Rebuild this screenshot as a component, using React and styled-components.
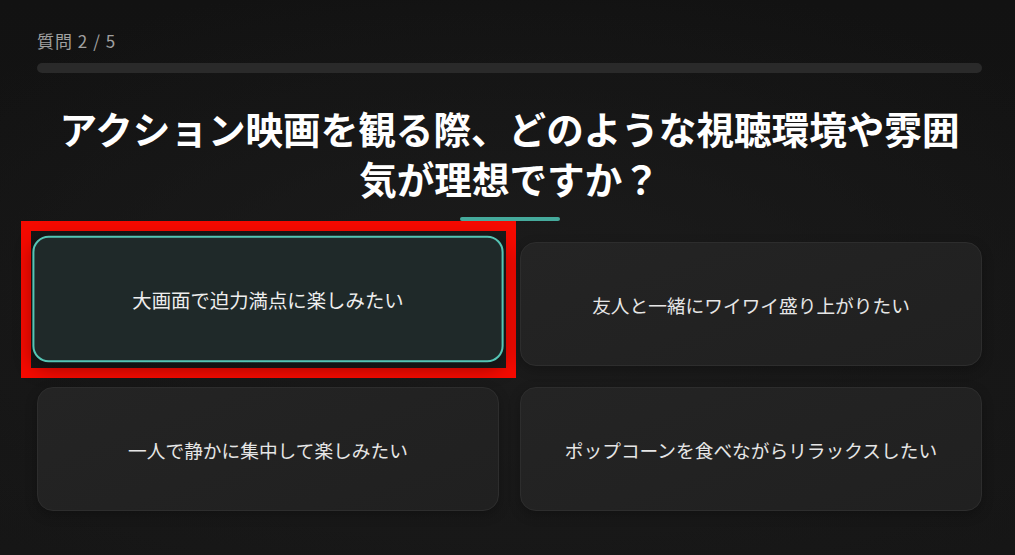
import React from "react";
import styled, { createGlobalStyle } from "styled-components";

const Global = createGlobalStyle`
  html, body { margin: 0; padding: 0; }
  body {
    background: #141414;
    font-family: "Noto Sans CJK JP", "Noto Sans", sans-serif;
  }
`;

const Page = styled.div`
  width: 1015px;
  height: 555px;
  box-sizing: border-box;
  padding: 30px 33px 0 37px;
  background:
    radial-gradient(ellipse 70% 60% at 50% 55%, #1c1c1c 0%, rgba(20,20,20,0) 100%),
    linear-gradient(180deg, #121212 0%, #161616 100%);
  display: flex;
  flex-direction: column;
  overflow: hidden;
`;

const Counter = styled.div`
  font-family: "Noto Sans CJK JP", Roboto, sans-serif;
  font-size: 17px;
  line-height: 22px;
  color: #a0a0a0;
  letter-spacing: 0.06em;
`;

const Track = styled.div`
  margin-top: 11px;
  height: 10px;
  border-radius: 5px;
  background: #2a2a2a;
`;

const Title = styled.h1`
  margin: 30px auto 0;
  max-width: 910px;
  font-size: 37.6px;
  line-height: 50px;
  font-weight: 700;
  color: #ffffff;
  text-align: center;
`;

const Accent = styled.div`
  align-self: center;
  width: 100px;
  height: 4px;
  border-radius: 2px;
  margin-top: 14px;
  background: #45aa9c;
`;

const Grid = styled.div`
  margin-top: 21px;
  display: grid;
  grid-template-columns: 462px 462px;
  grid-auto-rows: 124px;
  column-gap: 21px;
  row-gap: 21px;
`;

const Cell = styled.div`
  position: relative;
`;

const Card = styled.div`
  height: 100%;
  box-sizing: border-box;
  border-radius: 16px;
  display: flex;
  align-items: center;
  justify-content: center;
  font-size: ${(p) => (p.$selected ? "19px" : "18.7px")};
  color: ${(p) => (p.$selected ? "#eeeeee" : "#e6e6e6")};
  background: ${(p) =>
    p.$selected
      ? "#1f2929"
      : "linear-gradient(160deg, #242424 0%, #202020 100%)"};
  border: ${(p) => (p.$selected ? "2px solid #55c4b4" : "1px solid #2d2d2d")};
  transform: ${(p) => (p.$selected ? "translateY(-5px) scale(1.02)" : "none")};
  box-shadow: ${(p) =>
    p.$selected ? "0 6px 18px rgba(0,0,0,0.35)" : "0 4px 12px rgba(0,0,0,0.25)"};
`;

const Highlight = styled.div`
  position: absolute;
  left: -16px;
  right: -17px;
  top: -21px;
  bottom: -12px;
  border: 10px solid #f50a00;
  pointer-events: none;
`;

const options = [
  "大画面で迫力満点に楽しみたい",
  "友人と一緒にワイワイ盛り上がりたい",
  "一人で静かに集中して楽しみたい",
  "ポップコーンを食べながらリラックスしたい",
];

export default function App() {
  const selected = 0;
  return (
    <>
      <Global />
      <Page>
        <Counter>質問 2 / 5</Counter>
        <Track />
        <Title>アクション映画を観る際、どのような視聴環境や雰囲気が理想ですか？</Title>
        <Accent />
        <Grid>
          {options.map((o, i) => (
            <Cell key={o}>
              {i === selected && <Highlight />}
              <Card $selected={i === selected}>{o}</Card>
            </Cell>
          ))}
        </Grid>
      </Page>
    </>
  );
}
